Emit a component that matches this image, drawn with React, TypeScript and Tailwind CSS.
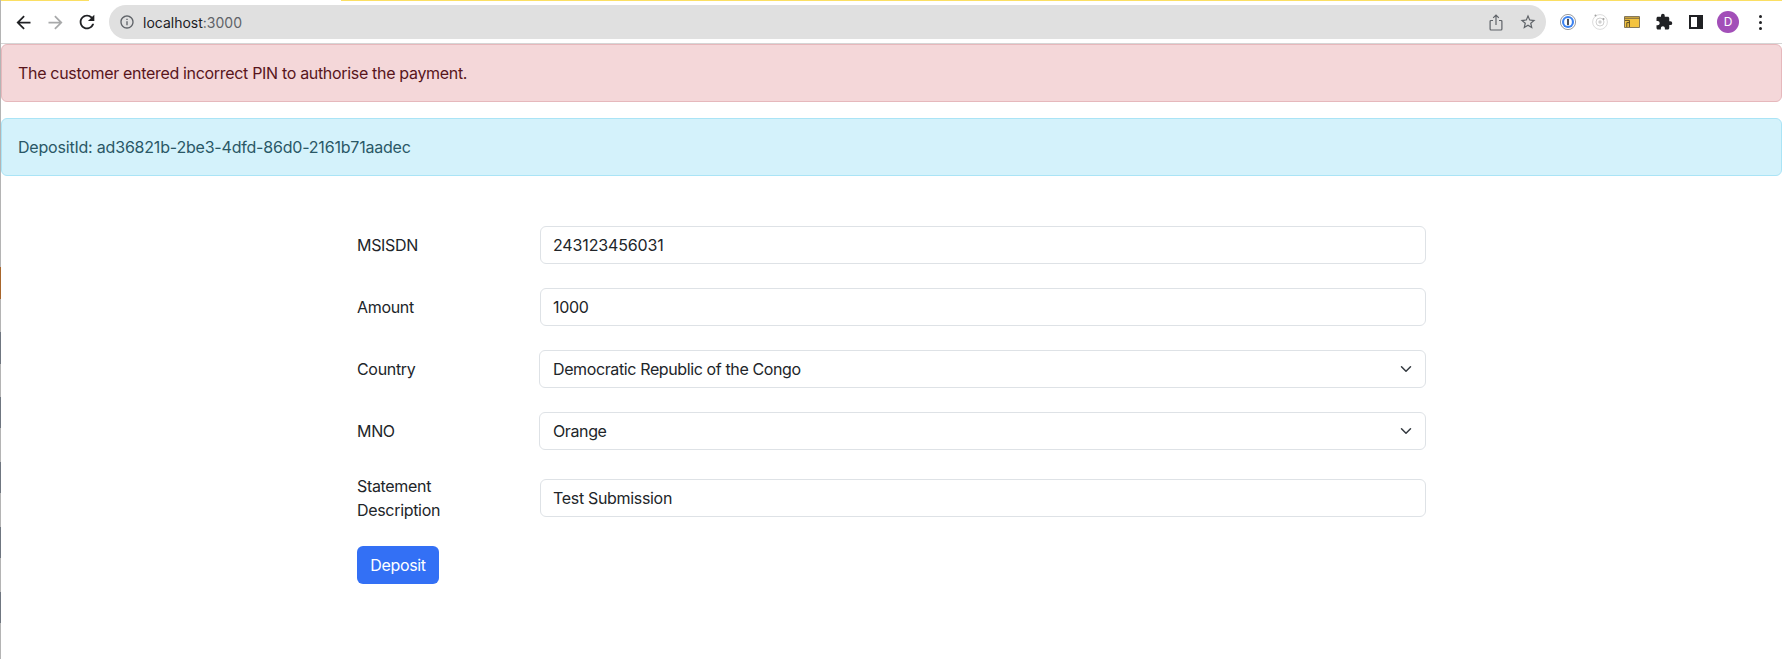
import { MdArrowBack, MdArrowForward, MdExtension, MdInfoOutline, MdRefresh, MdStarBorder } from "react-icons/md";

function ToolbarButton({ children }: { children: React.ReactNode }) {
  return <div className="w-8 h-8 flex items-center justify-center shrink-0">{children}</div>;
}

function BrowserBar() {
  return (
    <div className="h-[44px] border-b border-[#d5d5d5] bg-white flex flex-col">
      {/* Top stripe */}
      <div className="h-px flex">
        <div className="w-[88px] bg-[#fbdf63]" />
        <div className="w-[252px]" />
        <div className="flex-1 bg-[#fbdf63]" />
      </div>
      <div className="flex-1 flex items-center pl-[6px] pr-[6px]">
        <ToolbarButton>
          <MdArrowBack className="text-[#202124]" size={21} />
        </ToolbarButton>
        <ToolbarButton>
          <MdArrowForward className="text-[#a8a9aa]" size={21} />
        </ToolbarButton>
        <ToolbarButton>
          <MdRefresh className="text-[#202124]" size={22} />
        </ToolbarButton>

        <div className="ml-[6px] mr-[6px] flex-1 h-[34px] rounded-full bg-[#e0e0e0] flex items-center pl-[8px] pr-[2px]">
          <div className="w-[20px] flex justify-center">
            <MdInfoOutline className="text-[#5f6368]" size={16} />
          </div>
          <span className="ml-[6px] text-[14px] tracking-normal text-[#202124]">
            localhost<span className="text-[#5f6368]">:3000</span>
          </span>
          <div className="flex-1" />
          <ToolbarButton>
            <svg width="14" height="17" viewBox="0 0 14 17" fill="none" stroke="#5f6368" strokeWidth="1.2">
              <path d="M4 6.5H2a.9.9 0 0 0-.9.9v7.7c0 .5.4.9.9.9h10c.5 0 .9-.4.9-.9V7.4a.9.9 0 0 0-.9-.9h-2" />
              <path d="M7 11V1.2M4.2 3.8 7 1l2.8 2.8" />
            </svg>
          </ToolbarButton>
          <ToolbarButton>
            <MdStarBorder className="text-[#5f6368]" size={18} />
          </ToolbarButton>
        </div>

        <ToolbarButton>
          {/* password manager */}
          <svg width="16" height="16" viewBox="0 0 16 16">
            <circle cx="8" cy="8" r="7.6" fill="#fff" stroke="#6b6f76" strokeWidth="0.7" />
            <circle cx="8" cy="8" r="6" fill="#3b82f0" />
            <circle cx="8" cy="8" r="3.9" fill="#fff" />
            <rect x="7.2" y="4.8" width="1.6" height="6.4" rx="0.5" fill="#1c2430" />
          </svg>
        </ToolbarButton>
        <ToolbarButton>
          <svg width="16" height="16" viewBox="0 0 16 16" fill="none">
            <circle cx="8" cy="8" r="7.4" stroke="#dcdcdc" />
            <circle cx="8" cy="8" r="4" stroke="#d0d0d0" />
            <circle cx="8" cy="8" r="1.7" fill="#d0d0d0" />
            <circle cx="3.5" cy="1.5" r="1" fill="#a0a0a0" />
            <circle cx="11.5" cy="5" r="1" fill="#a0a0a0" />
          </svg>
        </ToolbarButton>
        <ToolbarButton>
          <svg width="16" height="12" viewBox="0 0 16 12">
            <rect x="0.4" y="0.4" width="15.2" height="11.2" rx="0.6" fill="#f3c340" stroke="#5a5140" strokeWidth="0.8" />
            <path d="M0.5 2.2H15.5" stroke="#5a5140" strokeWidth="0.9" />
            <path d="M1 4.4H5.4V11M2.8 11V6.6H5.4" fill="none" stroke="#4a3f20" strokeWidth="0.9" />
          </svg>
        </ToolbarButton>
        <ToolbarButton>
          <MdExtension className="text-[#202124]" size={18} />
        </ToolbarButton>
        <ToolbarButton>
          <div className="w-[14px] h-[14px] bg-[#202124] flex pl-[2px] py-[2px] pr-[6px]">
            <div className="flex-1 bg-white" />
          </div>
        </ToolbarButton>
        <ToolbarButton>
          <div className="w-[22px] h-[22px] rounded-full bg-[#a24fb8] text-white text-[12px] tracking-normal flex items-center justify-center">
            D
          </div>
        </ToolbarButton>
        <ToolbarButton>
          <div className="flex flex-col gap-[3px]">
            <div className="w-[3px] h-[3px] rounded-full bg-[#202124]" />
            <div className="w-[3px] h-[3px] rounded-full bg-[#202124]" />
            <div className="w-[3px] h-[3px] rounded-full bg-[#202124]" />
          </div>
        </ToolbarButton>
      </div>
    </div>
  );
}

function Field({ label, value, className = "" }: { label: string; value: string; className?: string }) {
  return (
    <input
      aria-label={label}
      defaultValue={value}
      className={`w-[886px] h-[38px] ml-[183px] border border-[#dee2e6] rounded-[6px] px-[12px] text-[16px] text-[#212529] bg-white outline-none ${className}`}
    />
  );
}

function Select({ label, value }: { label: string; value: string }) {
  return (
    <div className="relative w-[887px] h-[38px] ml-[182px]">
      <select
        aria-label={label}
        defaultValue={value}
        className="w-full h-full appearance-none border border-[#dee2e6] rounded-[6px] pl-[13px] pr-[36px] text-[16px] tracking-[-0.38px] text-[#212529] bg-white outline-none"
      >
        <option>{value}</option>
      </select>
      <svg
        className="absolute right-[14px] top-[13px] pointer-events-none"
        width="12"
        height="12"
        viewBox="0 0 16 16"
        fill="none"
        stroke="#343a40"
        strokeWidth="2"
        strokeLinecap="round"
        strokeLinejoin="round"
      >
        <path d="m2 5 6 6 6-6" />
      </svg>
    </div>
  );
}

function Row({ label, children, tall }: { label: string; children: React.ReactNode; tall?: boolean }) {
  return (
    <div className={`relative flex items-center mb-[24px] ${tall ? "h-[48px]" : "h-[38px]"}`}>
      <label className="absolute left-0 w-[150px] text-[16px] leading-[24px] text-[#212529]">{label}</label>
      {children}
    </div>
  );
}

// window behind the browser shows through on the left edge
function EdgeStrip() {
  return (
    <div className="absolute -left-px top-[267px] w-px flex flex-col">
      <div className="h-[32px] bg-[#a8662c]" />
      <div className="h-[33px]" />
      <div className="h-[32px] bg-[#6f7680]" />
      <div className="h-[33px]" />
      <div className="h-[31px] bg-[#6f7680]" />
      <div className="h-[34px]" />
      <div className="h-[31px] bg-[#6f7680]" />
      <div className="h-[34px]" />
      <div className="h-[31px] bg-[#6f7680]" />
      <div className="h-[34px]" />
      <div className="h-[31px] bg-[#6f7680]" />
    </div>
  );
}

export default function App() {
  return (
    <div className="relative min-h-[659px] bg-white border-l border-[#b4b4b4] font-['Inter',sans-serif] tracking-[-0.32px]">
      <EdgeStrip />
      <BrowserBar />

      <div className="h-[58px] flex items-center px-[16px] bg-[#f4d7d9] border border-[#e6b8bc] rounded-[6px] text-[16px] text-[#58151c]">
        The customer entered incorrect PIN to authorise the payment.
      </div>
      <div className="mt-[16px] h-[58px] flex items-center px-[16px] bg-[#d4f2fb] border border-[#aae4f6] rounded-[6px] text-[16px] tracking-[-0.2px] text-[#2a5866]">
        DepositId: ad36821b-2be3-4dfd-86d0-2161b71aadec
      </div>

      {/* Form */}
      <form className="mt-[50px] ml-[356px] w-[1069px]">
        <Row label="MSISDN">
          <Field label="MSISDN" value="243123456031" className="tracking-[-0.15px]" />
        </Row>
        <Row label="Amount">
          <Field label="Amount" value="1000" />
        </Row>
        <Row label="Country">
          <Select label="Country" value="Democratic Republic of the Congo" />
        </Row>
        <Row label="MNO">
          <Select label="MNO" value="Orange" />
        </Row>
        <Row label="Statement Description" tall>
          <Field label="Statement Description" value="Test Submission" />
        </Row>
        <button
          type="button"
          className="w-[82px] h-[38px] rounded-[6px] bg-[#3370f5] text-white text-[16px]"
        >
          Deposit
        </button>
      </form>
    </div>
  );
}
